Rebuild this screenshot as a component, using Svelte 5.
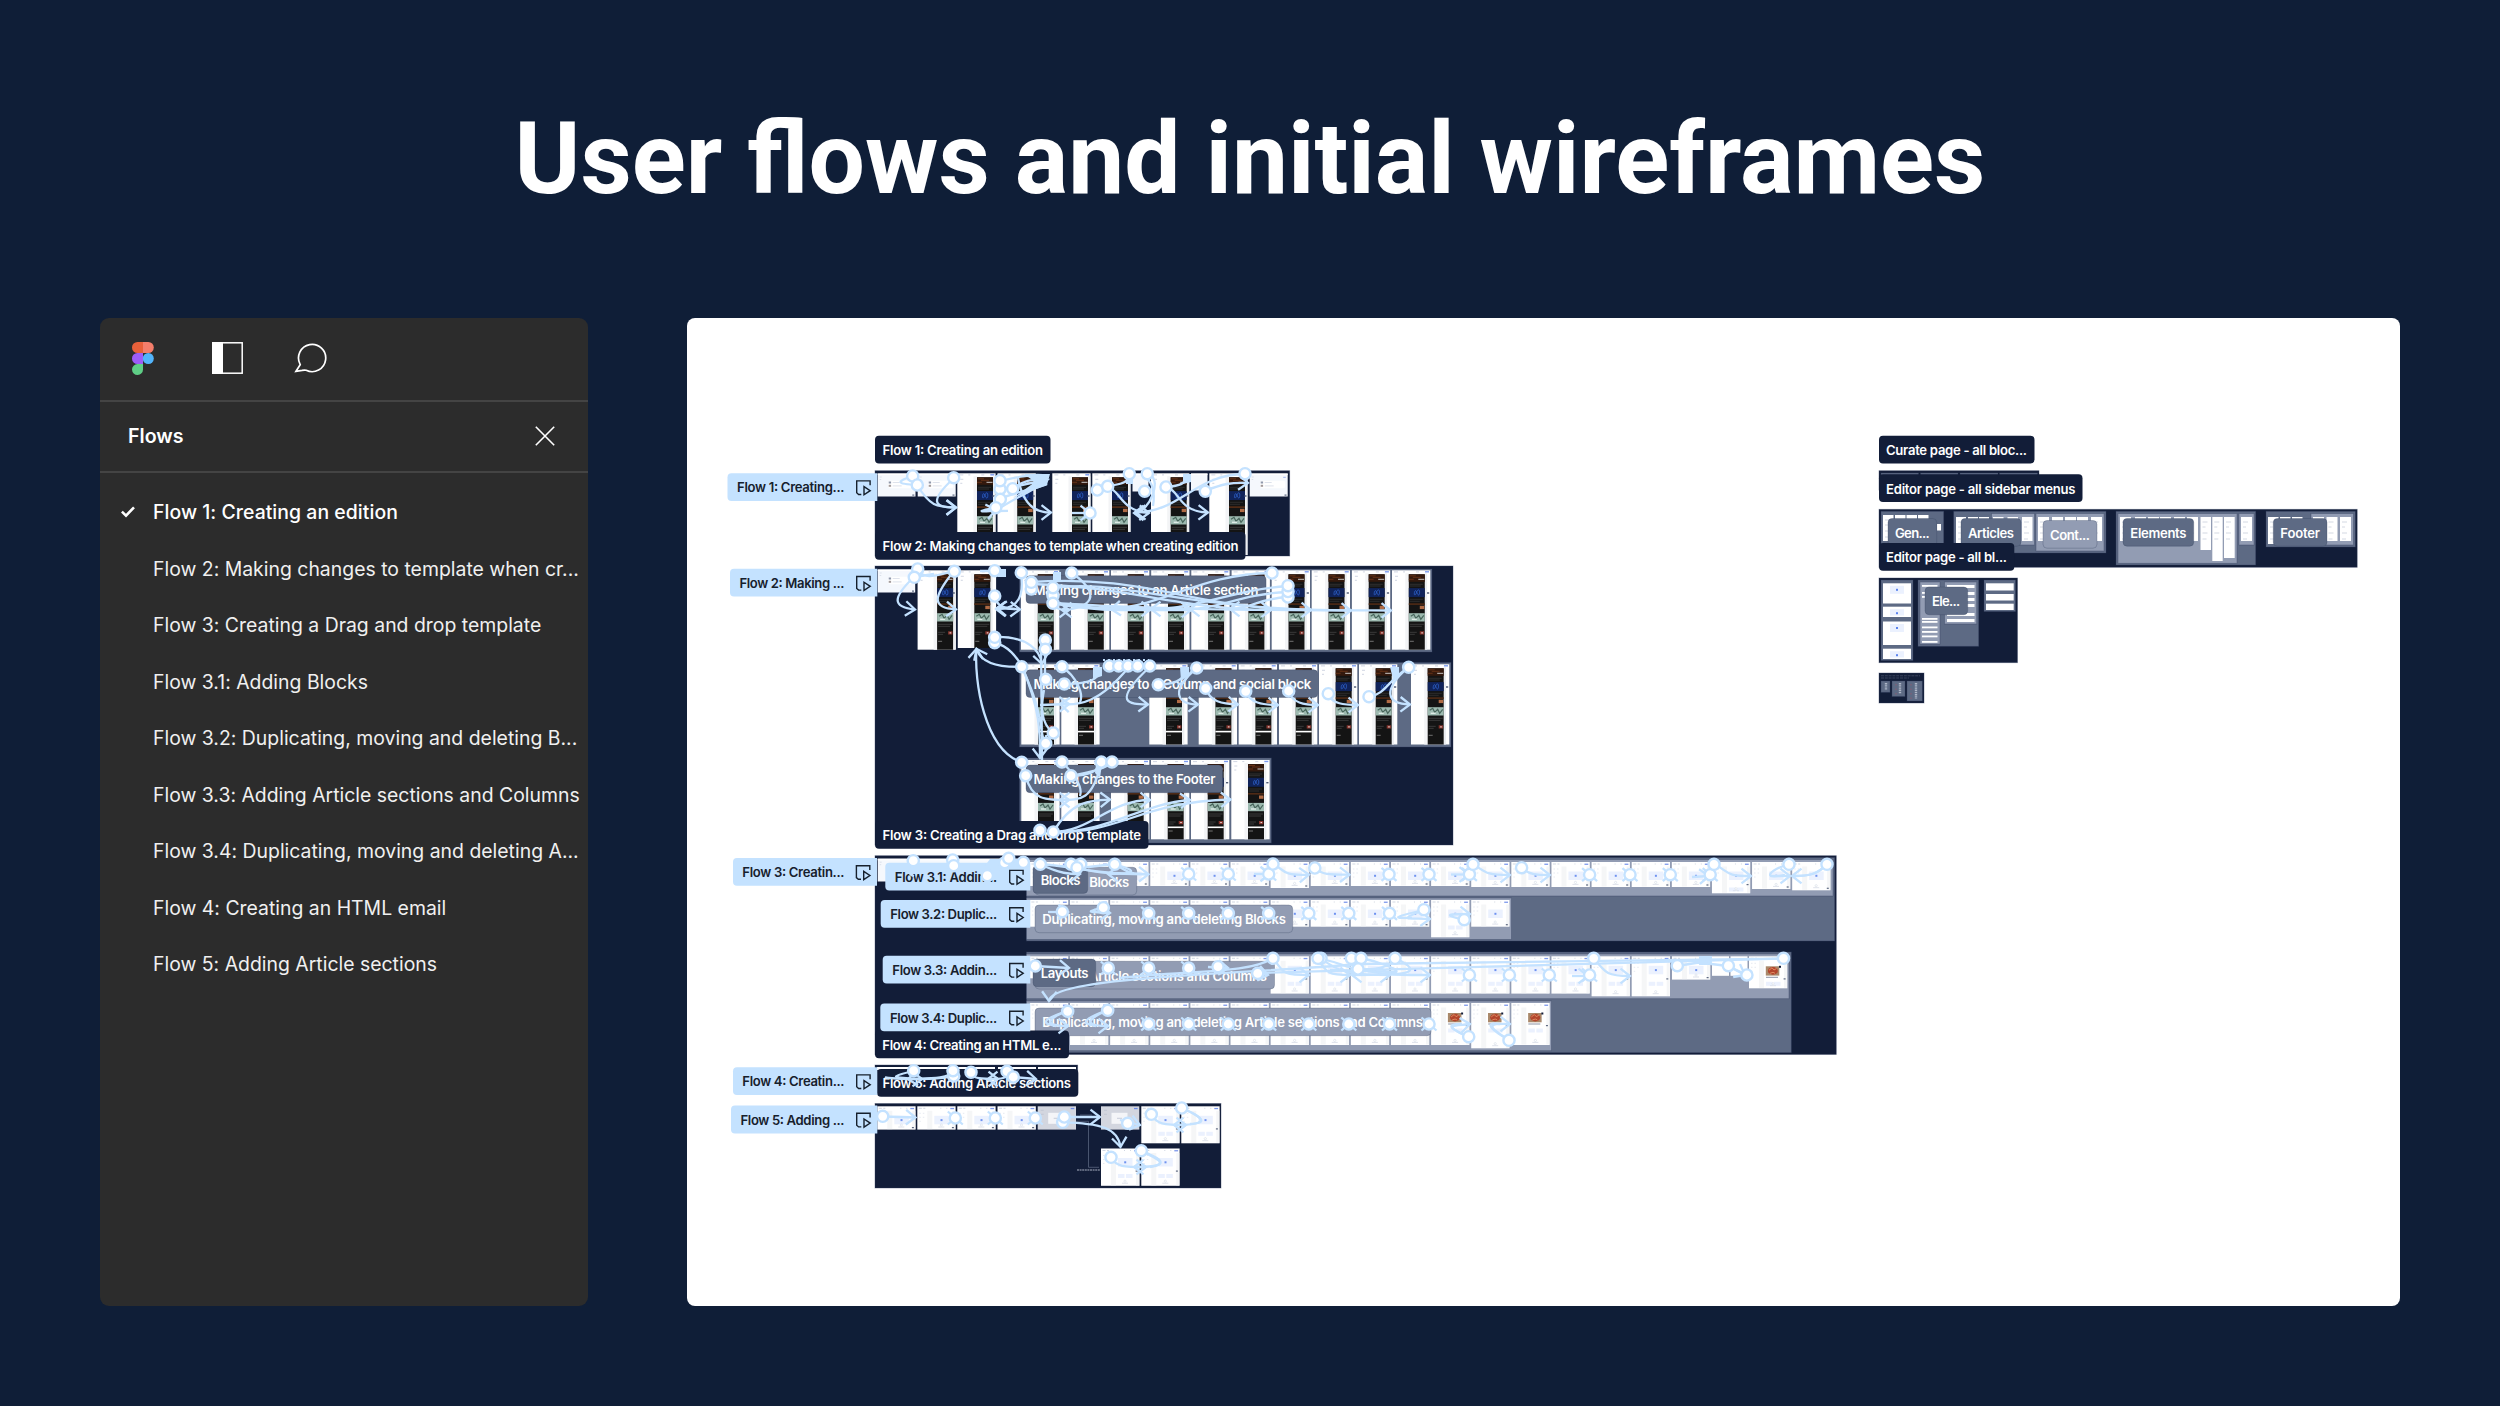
<script>
	const flows = [
		'Flow 1: Creating an edition',
		'Flow 2: Making changes to template when cr...',
		'Flow 3: Creating a Drag and drop template',
		'Flow 3.1: Adding Blocks',
		'Flow 3.2: Duplicating, moving and deleting B...',
		'Flow 3.3: Adding Article sections and Columns',
		'Flow 3.4: Duplicating, moving and deleting A...',
		'Flow 4: Creating an HTML email',
		'Flow 5: Adding Article sections'
	];
	let selected = 0;

	const NAVY = '#121d38';
	const SLATE = '#5d6a84';
	const MIST = '#929cb3';
	const SKY = '#c4e2ff';

	// sections: x1, y1, x2, y2, fill
	const sections = [
		[875, 470.7, 1289.7, 556, NAVY],
		[875, 566, 1453, 845, NAVY],
		[1019.5, 569, 1432, 652, SLATE],
		[1019.5, 662.5, 1451, 747, SLATE],
		[1019.5, 758, 1271.3, 843, SLATE],
		[875, 855.7, 1836.3, 1054.5, NAVY],
		[1026.5, 857.5, 1834.7, 941, SLATE],
		[1026.5, 859.5, 1833, 896, MIST],
		[1026.5, 898, 1511.5, 939.5, MIST],
		[1026.5, 952, 1791.3, 1052.7, SLATE],
		[1026.5, 954, 1789, 998.7, MIST],
		[1026.5, 1001, 1551.5, 1050.7, MIST],
		[875, 1065, 1077.7, 1090, NAVY],
		[875, 1103.5, 1221, 1188, NAVY],
		[1879, 470.7, 2039, 490, NAVY],
		[1881, 473, 1918.5, 480, SLATE],
		[1920.5, 473, 1958, 480, SLATE],
		[1960, 473, 1998, 480, SLATE],
		[1999.5, 473, 2037.5, 480, SLATE],
		[1879, 509.3, 2357.2, 567.3, NAVY],
		[1881, 511.3, 1943.7, 545, SLATE],
		[1953.7, 511.3, 2106, 553, SLATE],
		[1991.5, 513.5, 2034.5, 545, MIST],
		[2036, 513.5, 2104, 551, MIST],
		[2116, 511.3, 2255.7, 565, SLATE],
		[2118, 513.5, 2237, 563.3, MIST],
		[2239, 513.5, 2254, 545, MIST],
		[2266, 511.3, 2355.3, 547, SLATE],
		[2311, 513.5, 2353.5, 545, MIST],
		[1879, 578, 2017.5, 662.7, NAVY],
		[1881, 580, 1913, 660.5, SLATE],
		[1918, 580, 1978.7, 646.3, SLATE],
		[1920, 582, 1940, 644, MIST],
		[1944.5, 582, 1976.7, 624, MIST],
		[1984, 580, 2015.5, 611.5, SLATE],
		[1879, 673, 1924, 703, NAVY],
		[1881, 681, 1890, 692.3, SLATE],
		[1892, 681, 1905, 696.5, SLATE],
		[1907, 681, 1922.3, 701, SLATE]
	];

	// light pages: x, y, width, height, kind
	const col = (i) => 1029.9 + 40.12 * i;
	const tops = { 6: 888, 11: 887, 12: 887, 13: 887, 14: 887, 15: 887, 16: 887, 17: 893.3, 18: 889, 19: 890.3 };
	const pages = [
		[877.7, 473.5, 37.8, 23, 'list'],
		[917.7, 473.5, 38, 23, 'list'],
		[1132.5, 473.5, 16, 18, 'list'],
		[1191, 473.5, 16.5, 17, 'list'],
		[1249.7, 473.5, 38, 23, 'list'],
		[877.7, 569.5, 37.5, 23, 'list'],
		[877.7, 858.7, 150, 22.8, 'list'],
		...Array.from({ length: 20 }, (_, i) => [col(i), 862, 38.3, (tops[i] ?? 886) - 862, 'block']),
		...Array.from({ length: 12 }, (_, i) => [col(i), 900, 38.3, i === 10 ? 37.3 : 26.7, 'block']),
		...Array.from({ length: 16 }, (_, i) => [col(i), 956.3, 38.3, i < 6 ? 22 : i > 13 ? 40 : 37.3, 'tall']),
		[1672, 956.3, 38.3, 23.3, 'block'],
		[1712, 956.3, 17, 19.5, 'plain'],
		[1730.5, 956.3, 17, 19.5, 'plain'],
		[1749, 956.3, 38.3, 32, 'food'],
		...Array.from({ length: 13 }, (_, i) => [col(i), 1003, 38.3, i === 11 ? 45.3 : 42, i > 9 ? 'food' : 'tall']),
		...[877, 917, 957, 998, 1038].map((x) => [x, 1067, 38, 3, 'plain']),
		[877.3, 1106.3, 38.3, 23.3, 'block'],
		[917.3, 1106.3, 38.3, 23.3, 'block'],
		[957.3, 1106.3, 38.3, 23.3, 'block'],
		[997.5, 1106.3, 38.3, 23.3, 'block'],
		[1037.7, 1106.3, 38.3, 23.3, 'grey'],
		[1101, 1106.3, 38.3, 23.3, 'grey'],
		[1141.3, 1106.3, 38.3, 37, 'tall'],
		[1181.3, 1106.3, 38.3, 37, 'tall'],
		[1101, 1148.5, 38.6, 37.3, 'tall'],
		[1141.3, 1148.5, 38.3, 37.3, 'tall']
	];

	// email previews: x, top, bottom, offset of the dark column
	const at = (xs, y1, y2, dx) => xs.map((x) => [x, y1, y2, dx]);
	const mails = [
		...at([957.3, 997.5, 1052.3, 1092.3, 1151, 1209.3], 473.3, 555, 19.7),
		[917.6, 570.3, 649.7, 19.5],
		[957.8, 570.3, 648, 16.5],
		...at([1021, 1071, 1111, 1151.2, 1191.3, 1231.6, 1271.7, 1311.7, 1351.9, 1392], 570.3, 649.7, 16.8),
		...at([1021.3, 1061.3, 1149.3, 1198.7, 1238.7, 1279, 1319, 1359, 1411], 664.3, 744.5, 16.7),
		...at([1021.3, 1061.3, 1111, 1151, 1191, 1231.3], 760, 839.3, 16.7)
	];

	// plain boxes of the component sheets: x1, y1, x2, y2
	const boxes = [
		...[1883, 1895, 1906.5, 1918].map((x) => [x, 515, x + 10.5, 541]),
		[1937, 524, 1941, 530.5],
		...[1956, 1968, 1979].map((x) => [x, 517, x + 10, 543]),
		...[1993, 2007.5, 2022].map((x) => [x, 517, x + 10.5, 541]),
		...[2038, 2052, 2065, 2077, 2091].map((x) => [x, 517, x + 11, 541]),
		...[2120, 2135, 2148, 2160, 2174, 2187].map((x) => [x, 517, x + 11, 541]),
		[2200.5, 517, 2211, 550],
		[2212.3, 517, 2222.7, 561],
		[2224, 517, 2234.7, 558],
		[2241, 517, 2252, 541],
		...[2268, 2280, 2292].map((x) => [x, 517, x + 10.5, 544]),
		...[2313, 2326.5, 2340].map((x) => [x, 517, x + 11, 541]),
		[1883, 583.3, 1911, 603.5],
		[1883, 606.7, 1911, 617],
		[1883, 621.5, 1911, 645],
		[1883, 648.7, 1911, 659],
		[1986, 583.3, 2013.7, 590.5],
		[1986, 594, 2013.7, 600.5],
		[1986, 603.7, 2013.7, 610],
		...[585, 592, 596, 618, 621, 626.5, 631, 635.5, 641].map((y) => [1922, y, 1937.5, y + 1.8]),
		...[585, 592, 598, 604, 613, 619].map((y) => [1947, y, 1974.5, y + 3])
	];

	// section captions: x1, y1, x2, fill, text, text start, text end
	const labels = [
		[875, 435.7, 1050.5, NAVY, 'Flow 1: Creating an edition', 882.5, 1043],
		[875, 532, 1245.5, NAVY, 'Flow 2: Making changes to template when creating edition', 882.5, 1238.5],
		[1026, 575.7, 1266, SLATE, 'Making changes to an Article section', 1033.5, 1258.5],
		[1026, 669.8, 1317.7, SLATE, 'Making changes to a Column and social block', 1033.5, 1311.3],
		[1026, 765, 1222.7, SLATE, 'Making changes to the Footer', 1033.5, 1215.5],
		[875, 821, 1148.5, NAVY, 'Flow 3: Creating a Drag and drop template', 882.5, 1141],
		[1035, 867.3, 1136.7, MIST, 'Blocks', 1089.3, 1129.3],
		[1033, 865.7, 1087.7, SLATE, 'Blocks', 1040.7, 1080.5],
		[1035, 905, 1292.7, MIST, 'Duplicating, moving and deleting Blocks', 1042.3, 1286],
		[1035, 961.3, 1274.5, MIST, 'Article sections and Columns', 1089, 1267],
		[1033, 959, 1095.7, SLATE, 'Layouts', 1040.7, 1088.5],
		[1035, 1008, 1431, MIST, 'Duplicating, moving and deleting Article sections and Columns', 1042.3, 1423],
		[875, 1030.5, 1069, NAVY, 'Flow 4: Creating an HTML e...', 882.3, 1061.5],
		[877, 1069, 1078.3, NAVY, 'Flow 5: Adding Article sections', 882.5, 1071],
		[1879, 435.7, 2034.5, NAVY, 'Curate page - all bloc...', 1886, 2027],
		[1879, 474.3, 2082.5, NAVY, 'Editor page - all sidebar menus', 1886, 2075.5],
		[1888, 518.5, 1936.7, SLATE, 'Gen...', 1895, 1929.7],
		[1961, 518.5, 2021, SLATE, 'Articles', 1968, 2014],
		[2043, 520.5, 2097, MIST, 'Cont...', 2050, 2090],
		[2123, 518.5, 2193.7, SLATE, 'Elements', 2130.3, 2186.5],
		[2273.3, 518.5, 2327, SLATE, 'Footer', 2280.3, 2320],
		[1879, 543, 2014.3, NAVY, 'Editor page - all bl...', 1886, 2007],
		[1925, 587, 1967.7, SLATE, 'Ele...', 1932, 1960.3]
	];

	// flow starting points: x1, y1, x2, text, text start, text end
	const tags = [
		[727.5, 473.2, 877.3, 'Flow 1: Creating...', 737, 844.5],
		[730, 568.8, 877.3, 'Flow 2: Making ...', 739.5, 844.5],
		[733, 858, 877, 'Flow 3: Creatin...', 742.3, 844.5],
		[733, 1067.2, 877.3, 'Flow 4: Creatin...', 742.3, 844.5],
		[731, 1105.6, 877.3, 'Flow 5: Adding ...', 740.5, 844.5],
		[885.3, 862.7, 1030.3, 'Flow 3.1: Addin...', 894.7, 997.3],
		[880.7, 900, 1030.3, 'Flow 3.2: Duplic...', 890.3, 997.3],
		[882.7, 955.8, 1030.3, 'Flow 3.3: Addin...', 892.3, 997.3],
		[880.3, 1003.5, 1030.3, 'Flow 3.4: Duplic...', 890, 997.3]
	];

	// connectors without an arrow head
	const links = [
		'M912 476C896 482 896 484 917 485',
		'M1000 481C1030 474 1040 474 1047 476M1000 489C1020 486 1035 482 1047 480M1000 499C1020 490 1040 488 1047 484',
		'M1107.7 486C1120 484 1128 484 1129 474M1097 490L1108 486M1144 476C1156 484 1154 500 1153 506M1166 487C1180 486 1186 484 1188 474',
		'M914 577L934 574M954 571C934 576 926 580 917 570M994.7 571L980 571',
		'M1064 684C1080 684 1096 682 1098 674M1158 685C1170 684 1182 682 1184 674M1197 668C1184 674 1188 684 1178 684',
		'M1062 667C1076 676 1084 694 1080 702M1369 697C1386 694 1388 680 1408 668',
		'M1062 762C1080 780 1082 790 1080 796M1071 776C1094 775 1096 770 1100 765M1071 776C1086 772 1098 772 1112 763',
		'M1021 665C1032 690 1036 700 1040 720C1044 750 1047 744 1046 735M1045 650L1045 680M1041 640L1042 760M1053 733C1040 722 1041 706 1044 690',
		'M1040 864L1080 868L1114 864C1130 872 1126 874 1148 874M1040 864C1070 866 1090 874 1148 874',
		'M1008 858L1000 873M1004 863L1023 863M952 860L957 870M913 861C912 870 906 874 914 876',
		'M1273 958C1250 974 1190 970 1120 978M1257 973L1783.5 958.5M1318 958C1345 964 1350 969 1358 969C1380 970 1395 965 1395 958',
		'M1351 958L1361 958M1361 958C1380 962 1400 970 1396 972L1330 970M1677 966L1708 961M1728 966L1703 963M1728 966L1747 975',
		'M1789 864C1770 870 1760 880 1785 875M1827 864C1818 874 1810 876 1795 876M1423 910C1390 918 1394 918 1412 918',
		'M1067 1011C1040 1020 1042 1024 1056 1026M1107.7 1010C1080 1020 1082 1024 1096 1026',
		'M1469 1037C1448 1028 1446 1024 1462 1024M1509 1040C1484 1026 1488 1022 1500 1024',
		'M1181.7 1108C1204 1118 1208 1123 1190 1124M1141.3 1151C1160 1160 1168 1164 1150 1167',
		'M913 1071C885 1078 896 1077 915 1079M953 1076C940 1080 920 1079 905 1079'
	];
	const arrows = [
		'M917 485C930 506 936 507 956 507.5',
		'M954 478C930 500 932 508 956 507.5',
		'M996 508C970 512 985 512 996 510',
		'M1013 489C1026 478 1034 480 1047 480C1032 492 1010 500 996 511',
		'M1018 478C1024 510 1040 512.5 1051 512.5',
		'M1072 513L1090 513',
		'M1107 486C1120 490 1122 512 1149 513',
		'M1166 487C1180 490 1178 512 1208 512.5',
		'M1147 474C1164 476 1150 513 1134 513',
		'M1245 474C1196 474 1180 512 1136 512.5',
		'M1205 491C1222 484 1232 482 1248 483',
		'M914 577C892 598 892 607 915 609.5',
		'M954 571C932 598 932 608 956 609.5',
		'M994.7 596C996 606 1004 609 1020 609.5',
		'M1021 573C1026 605 1010 609 996 609',
		'M1015 609L997 608',
		'M1031 582C1150 574 1190 609 1311 610',
		'M1031 584C1140 588 1170 608 1271 610',
		'M1053 588C1120 578 1180 610 1351 610.5',
		'M1053 603C1160 610 1260 610 1391 610.5',
		'M1053 603C1090 612 1130 610 1191 610',
		'M1053 603C1080 608 1110 609 1151 609',
		'M1272 573C1200 574 1170 604 1111 609',
		'M1288 586C1230 590 1200 609 1151 609',
		'M1288 592C1240 594 1220 609 1190 609',
		'M1288 597C1260 598 1250 609 1230 609',
		'M1053 603C1056 609 1060 610 1069 610',
		'M1072 573C1110 600 1080 610 1062 610',
		'M994.7 637C1030 636 1040 652 1042 664',
		'M994.7 643C1010 646 1018 660 1022 666C1040 710 1040 730 1040 758',
		'M1021.7 666.7C980 668 978 652 976.5 649',
		'M1021.7 762.3C984 750 974 680 976.5 649',
		'M1040 705L1069 704',
		'M1128 668C1100 702 1080 706 1060 704',
		'M1149.7 667C1110 704 1130 704 1148 704.5',
		'M1197 668C1170 690 1176 704 1198 704.5',
		'M1205.7 688C1210 702 1222 704 1238 704.5',
		'M1245.7 691C1250 703 1262 705 1278 705',
		'M1288.7 691C1292 703 1304 705 1318 705',
		'M1328.3 694C1332 704 1344 705 1358 705',
		'M1408.7 667C1382 690 1386 704 1410 704.5',
		'M1025.7 776C1032 800 1044 800 1069 800',
		'M1101 764C1092 800 1082 800 1060 800',
		'M1053.3 832C1072 800 1092 800 1110 799.5',
		'M1053.3 832C1090 832 1110 800 1150 800',
		'M1053.3 832C1110 832 1140 804 1190 800',
		'M1053.3 832C1120 834 1140 802 1230.5 799.5',
		'M1040 864C1060 874 1070 874 1080 874',
		'M1114 864C1150 874 1120 874 1108 874',
		'M1077 868C1100 874 1120 874 1148.5 874.3',
		'M1254 874L1270 874',
		'M1273 864C1286 870 1280 876 1309 874.7',
		'M1314.8 868C1322 875 1330 874.7 1349.5 874.7',
		'M1451 874.5L1469 874.5',
		'M1473 864C1486 872 1484 875 1510 875',
		'M1521.6 868C1530 875 1536 875 1550 875',
		'M1692 877L1709 876',
		'M1714 864C1730 872 1724 876 1751 876',
		'M1827 864C1818 874 1810 876 1792 876',
		'M1770 876L1790 876',
		'M1048 912L1068 912',
		'M1103 908C1084 912 1088 912 1110 913',
		'M1423.9 910C1400 920 1402 918 1430 919',
		'M1464 920C1440 914 1450 914 1470 914',
		'M1035 966L1069 968',
		'M1783.5 958.5L1360 964C1250 974 1050 976 1049 1001',
		'M1208 967L1228 968',
		'M1257.7 973L1268 975',
		'M1273 958C1284 972 1280 975 1309 975',
		'M1318 958C1326 974 1330 975 1350 975',
		'M1321 958C1340 975 1360 975 1390 975',
		'M1358 969C1380 975 1400 975 1430 975',
		'M1395 958C1430 975 1400 975 1352 975',
		'M1572 976L1588 976',
		'M1593.7 958C1606 974 1608 976 1630 976',
		'M1728 966L1745 975',
		'M1067 1011C1040 1022 1050 1026 1068 1026',
		'M1108 1010C1080 1022 1090 1026 1108 1026',
		'M1469 1037C1440 1024 1455 1026 1470 1024',
		'M1509 1040C1480 1022 1495 1024 1510 1024',
		'M882.7 1116.5L915.5 1117.5',
		'M1064 1117L1100 1117',
		'M1062.7 1122.3C1100 1123 1118 1128 1120.5 1147',
		'M1120 1120L1140 1125',
		'M1151.3 1114.3C1156 1124 1164 1125 1186 1125',
		'M1181.7 1108C1210 1120 1206 1125 1174 1125',
		'M1111 1157.3C1116 1167 1124 1167 1146 1167',
		'M1141.3 1150.7C1170 1162 1166 1167 1134 1167',
		'M953 1071C950 1080 920 1078 908 1079',
		'M885 1077C888 1079 905 1079 922 1079',
		'M971 1072.3C972 1079 982 1079 998 1079',
		'M1007 1071C1010 1079 1000 1079 988 1079',
		'M1013 1077L1036 1079'
	];

	const row = (y, xs) => xs.map((x) => [x, y]);
	// hotspots that sit on an arrow tip and only show its corners
	const joints = [
		...row(874, [1188.7, 1228.3, 1268.7]),
		...row(874.3, [1389, 1429, 1469.4]),
		...row(874.7, [1589.6, 1630, 1670.3, 1710.2]),
		...row(913.3, [1148.7, 1188.7, 1228.3, 1268.7, 1308.8, 1348.8, 1389.5]),
		...row(968, [1108.3, 1148.7, 1188.7]),
		...row(975, [1469.4, 1509.4, 1549.3, 1589.6]),
		...row(1024, [1148.7, 1188.7, 1228.3, 1268.7, 1308.8, 1348.8, 1389.5, 1429]),
		...row(1118, [955.3, 995.3, 1035.3])
	];
	const spots = [
		[912.7, 476], [917.3, 485], [953.7, 477.7], [1000, 489], [1000, 480.7], [1012.7, 488.7],
		[1000.3, 499.3], [995.7, 507.7], [1097.3, 490], [1107.7, 486.3], [1090, 513],
		[1129.3, 473.7], [1147.3, 473.7], [1144.7, 491.3], [1166, 487], [1205.3, 491.3], [1245, 473.7],
		[917.7, 569], [914.3, 577.3], [954.3, 571.3], [994.7, 570.7], [994.7, 596],
		[994.7, 642.7], [994.7, 637.3], [1021.3, 572.7], [1031.3, 589], [1031.3, 582.3],
		[1053, 595.5], [1053, 587.7], [1053, 603.3], [1071.7, 573], [1045.3, 640], [1045.3, 649.3],
		[1272, 573], [1288, 597], [1288, 591.5], [1288, 585.7],
		[1021.7, 666.7], [1062, 666.7], [1045.7, 679.3], [1064.3, 684],
		...row(666, [1109.3, 1118.7, 1128, 1137.7, 1149.7]),
		[1158.3, 684.7], [1053.3, 733], [1045.7, 743.3], [1196.7, 668], [1205.7, 688.3],
		[1245.7, 691.3], [1288.7, 691], [1328.3, 693.7], [1369, 696.7], [1408.7, 667.3],
		[1021.7, 762.3], [1025.7, 775.7], [1062, 762], [1071, 775.7], [1101.3, 762], [1112, 762],
		[1040, 830.3], [1053.3, 832],
		[913.3, 860.7], [952.7, 860], [953.7, 865.7], [1004.7, 862.7], [1008.7, 858.3], [1023.3, 862.3],
		[987.3, 875.7], [1040.3, 864.3], [1071, 864.3], [1080.7, 864.3], [1077, 867.7], [1114.7, 864.3],
		[1273, 864], [1314.8, 868], [1473, 864.3], [1521.6, 867.7], [1714, 864.3], [1789, 864.3], [1827, 864.3],
		[1062.3, 911.7], [1103.3, 907.7], [1423.9, 909.7], [1464.2, 919.7],
		[1035.3, 966], [1218, 966.7], [1257.7, 973.3],
		...row(958.3, [1273, 1321, 1318, 1351.4, 1361, 1395, 1593.7, 1783.5]),
		[1358, 969], [1677.3, 965.7], [1728.4, 965.7], [1746.9, 975],
		[1067.7, 1011.3], [1107.7, 1010.3], [1468.7, 1036.7], [1509, 1040.3],
		[913.7, 1070.7], [953.7, 1076], [953, 1070.7], [971, 1072.3], [1007, 1071.3], [1013.3, 1077],
		[882.7, 1116.3], [1062.7, 1122.3], [1064.3, 1117], [1127.7, 1123.3], [1151.3, 1114.3],
		[1181.7, 1108], [1111, 1157.3], [1141.3, 1150.7]
	];
</script>

{#snippet page([x, y, w, h, kind])}
	<g transform="translate({x} {y})">
		<rect width={w} height={h} fill={kind === 'grey' ? '#d3d6df' : kind === 'list' ? '#f5f8fd' : '#fff'} />
		{#if kind === 'list'}
			<rect width={w} height="1.6" fill="#fff" />
			{#if w > 30}
				<rect x="10.5" y="7.3" width={Math.min(w, 38) - 13} height="7.4" rx="2" fill="#fff" />
				<rect x="11" y="8" width="2.4" height="2" fill="#8f98ab" />
				<rect x="11" y="11.3" width="2.4" height="2" fill="#a39b9b" />
				<path d="M15 9h7M15 12.4h9M2 3.5h2M2 6h1.5" stroke="#d5dbe6" stroke-width=".8" />
				<rect x="33.5" y="3.3" width="2.6" height="1" fill="#9db3f0" />
				<rect x={w - 3.2} y="21" width="2" height="1.2" fill="#5f6a82" />
			{/if}
		{:else if kind === 'grey'}
			<rect x="10.5" y="6.5" width="16" height="11" fill="#f4f5f8" />
			<rect x="33" y="1.6" width="3.6" height="1.3" fill="#6f8de8" />
			<path d="M16 12h5M3 4h3M3 8h3" stroke="#bcc3d2" stroke-width=".8" />
		{:else if kind !== 'plain'}
			<rect x="10" y="4.5" width="5" height={h - 5} fill="#f5f6f7" />
			<rect x="35" y="4.5" width="3" height={h - 5} fill="#f5f6f7" />
			<path d="M1.5 2h3M6 2h2M23 2h1M29 2h1" stroke="#c5cddb" stroke-width=".8" />
			<rect x="33" y="1.6" width="3.8" height="1.3" fill="#7f9aec" />
			<path d="M2 7h1.5M5.5 7h1.5M2 11h1.5M5.5 11h1.5M2 15h1.5" stroke="#e4e8f0" stroke-width=".9" />
			{#if kind === 'food'}
				<rect x="16.8" y="10" width="13.5" height="9.3" fill="#a9886a" />
				<ellipse cx="23.9" cy="14.6" rx="5" ry="3.8" fill="#b2452c" />
				<path d="M20 14l3-2.5 2 2.2 2.5-1.5M21 17l3-1 2 1" stroke="#e08a60" stroke-width="1" fill="none" />
				<path d="M17 21h12" stroke="#8b93a4" stroke-width="1" />
				<rect x="30" y="9.5" width="2" height="2" fill="#121d38" />
			{:else}
				<rect x="17" y="9.5" width="14.5" height="8.5" fill="#ebf1fe" />
				<rect x="23.2" y="12.8" width="2" height="2" fill="#6f92f0" />
			{/if}
			{#if h > 30}
				<rect x="17" y="25.5" width="6.5" height="4" fill="#ebf1fe" />
				<rect x="25" y="25.5" width="6.5" height="4" fill="#ebf1fe" />
			{/if}
			<circle cx="24" cy={h - 4.6} r="1.1" fill="none" stroke="#d5dbe6" stroke-width=".6" />
			<path d="M21 {h - 2.6}h6" stroke="#d5dbe6" stroke-width=".8" />
			<rect x="34.6" y={h > 30 ? 22 : h - 2.6} width="2" height="1.2" fill="#5f6a82" />
		{/if}
	</g>
{/snippet}

{#snippet mail([x, y1, y2, dx])}
	<g transform="translate({x} {y1})">
		<rect width="38.3" height={y2 - y1} fill="#fff" />
		<rect x={dx - 3.5} y="3" width="3.5" height={y2 - y1 - 3} fill="#f3f4f6" />
		<rect x={dx + 16.3} y="3" width="2" height={y2 - y1 - 3} fill="#eceef1" />
		<path d="M2 1.6h4M11 1.6h2M24 1.6h3M3 6h3M3 10h2" stroke="#c5ccda" stroke-width=".8" />
		<rect x="33" y=".8" width="4" height="1.4" fill="#7d9cf0" />
		<rect x={dx} y="4" width="16" height={y2 - y1 - 4} fill="#141414" />
		<g transform="translate({dx} 4)">
			<rect width="16" height="7.5" fill="#33190d" />
			<path d="M1 1.5h6M4 3h8M0 5h5" stroke="#6b3418" stroke-width=".9" />
			<path d="M9.5 5h6" stroke="#ddd" stroke-width=".9" />
			<path d="M1 10h13M1 11.7h11" stroke="#3c3c3c" stroke-width=".7" />
			<rect y="13.8" width="16" height="9" fill="#10235a" />
			<path d="M5.5 19.5c.2-4 1.7-4 2.7-1s2.6 3 2.6-.5-2-3-3 0-2.2 3.4-2.3 1.5z" fill="none" stroke="#2f62cc" stroke-width=".8" />
			<path d="M1 25h13M1 27h10" stroke="#383838" stroke-width=".7" />
			<path d="M0 29.8h16" stroke="#4f2a15" stroke-width="1.6" />
			<rect x="11" y="31.5" width="4.5" height="3.3" fill="#b06a44" />
			<rect y="38.9" width="16" height="8.3" fill="#9dbab0" />
			<path d="M2 42l3-2 2 4 3-3 2 4 3-4" fill="none" stroke="#48665c" stroke-width="1.2" />
			<path d="M3 45h5" stroke="#dfece7" stroke-width="1.4" />
			<path d="M1 50h14M1 52h12M1 58h7M1 60h5" stroke="#444" stroke-width=".8" />
			<rect x="11" y="57" width="4.3" height="3.2" fill="#86342c" />
			<path d="M12.5 58.6h1.6" stroke="#fff" stroke-width=".9" />
			{#if y1 > 660 && x < 1300}
				<rect y="62.5" width="16" height="1.6" fill="#fff" />
			{/if}
			<path d="M1 67h4" stroke="#999" stroke-width=".7" />
		</g>
		<rect x="35" y="22" width="2.2" height="1.4" fill="#4c5873" />
	</g>
{/snippet}

<div class="slide">
	<h1>User flows and initial wireframes</h1>

	<main>
		<aside>
			<div class="toolbar">
				<svg class="logo" width="22" height="33" viewBox="0 0 22 33">
					<path d="M5.5 0H11v11H5.5a5.5 5.5 0 0 1 0-11z" fill="#e8603a" />
					<path d="M11 0h5.3a5.5 5.5 0 0 1 0 11H11z" fill="#f47e6b" />
					<path d="M5.5 11H11v11H5.5a5.5 5.5 0 0 1 0-11z" fill="#9d5cf7" />
					<circle cx="16.3" cy="16.5" r="5.5" fill="#52b4fb" />
					<path d="M5.5 22H11v5.3a5.5 5.5 0 1 1-5.5-5.3z" fill="#5fce86" />
				</svg>
				<svg class="layout" width="32" height="32" viewBox="0 0 32 32">
					<rect x=".8" y=".8" width="29.4" height="30.4" fill="none" stroke="#fff" stroke-width="1.5" />
					<path d="M0 0h11v32H0z" fill="#fff" />
				</svg>
				<svg class="comment" width="34" height="32" viewBox="0 0 34 32" fill="none" stroke="#fff" stroke-width="1.7">
					<path d="M2 29.3 6.2 22.6A13.6 13.6 0 1 1 12.2 28.3Q10.5 27.8 8 28.4Z" />
				</svg>
			</div>
			<div class="head">
				<span>Flows</span>
				<svg width="20" height="20" viewBox="0 0 20 20" stroke="#fff" stroke-width="1.6">
					<path d="M.8.8l18.4 18.4M19.2.8.8 19.2" />
				</svg>
			</div>
			<ul>
				{#each flows as flow, i}
					<li class:selected={i === selected}>
						<span class="check">
							{#if i === selected}
								<svg width="14" height="12" viewBox="0 0 14 12" fill="none" stroke="#fff" stroke-width="2.6">
									<path d="M.9 5.6 5 9.6l8-8.3" />
								</svg>
							{/if}
						</span>
						{flow}
					</li>
				{/each}
			</ul>
		</aside>

		<svg class="board" viewBox="687 318 1713 988">
			<defs>
				<marker id="tip" viewBox="-11 -9 13 18" markerWidth="13" markerHeight="18" refX="0" refY="0" orient="auto" markerUnits="userSpaceOnUse">
					<path d="M-9.5-7.3 0 0-9.5 7.3" fill="none" stroke={SKY} stroke-width="2.3" />
				</marker>
			</defs>

			{#each sections as [x1, y1, x2, y2, fill]}
				<rect x={x1} y={y1} width={x2 - x1} height={y2 - y1} {fill} stroke="#33405f" stroke-opacity=".45" stroke-width=".8" />
			{/each}
			{#each pages as p}
				{@render page(p)}
			{/each}
			{#each mails as m}
				{@render mail(m)}
			{/each}
			{#each boxes as [x1, y1, x2, y2]}
				<rect x={x1} y={y1} width={x2 - x1} height={y2 - y1} fill="#fff" />
				{#if y2 - y1 > 22 && x2 - x1 < 15}
					<path d="M{x1 + 2} {y1 + 5}h5m-5 5h3m-3 6h5m-5 6h4" stroke="#c9cfdc" stroke-width=".8" />
				{:else if x2 - x1 > 25 && y2 - y1 > 9}
					<rect x={x1 + 7} y={y1 + 2.5} width="14" height={Math.min(y2 - y1 - 4, 8)} fill="#ebf1fe" />
					<rect x={x1 + 13} y={y1 + 5.5} width="2" height="2" fill="#5b83ee" />
				{/if}
			{/each}

			<!-- notes and tokens inside the small sheets -->
			<path d="M1076 1121.3h12.5v46H1099M1080 1115h12" fill="none" stroke="#58637d" stroke-width=".8" />
			<path d="M1077 1170h23" stroke="#aab1c1" stroke-width="1" stroke-dasharray="2 .6" />
			<path d="M1881 675.8h39M1881 678h28" stroke="#454f68" stroke-width=".8" stroke-dasharray="3 .8" />
			<path d="M1886 683v7M1900 683v11M1916 683v16" stroke="#aeb6c7" stroke-width="2.4" stroke-dasharray="1.4 .8" />
			<path d="M1896 684v11M1911 684v15" stroke="#8a5c72" stroke-width="1" stroke-dasharray="1.5 3" />

			{#each labels as [x1, y1, x2, fill, text, t1, t2]}
				<rect x={x1} y={y1} width={x2 - x1} height="27.7" rx="4" {fill} stroke="#33405f" stroke-opacity={fill === NAVY ? 0 : 0.4} stroke-width=".7" />
				<text x={t1} y={y1 + 19.2} textLength={t2 - t1} fill="#fff">{text}</text>
			{/each}

			{#each tags as [x1, y1, x2, text, t1, t2]}
				<path d="M{x2} {y1}H{x1 + 4}a4 4 0 0 0-4 4v19.8a4 4 0 0 0 4 4H{x2}z" fill={SKY} />
				<text x={t1} y={y1 + 19} textLength={t2 - t1} fill="#16202c">{text}</text>
				<g transform="translate({x2 - 21.3} {y1 + 7})" fill="none" stroke="#16202c" stroke-width="1.4">
					<path d="M5.3 14.3H2.6L.7 12.6V.7h13.4V5" />
					<path d="M8 6.4v8.2l6.2-4.1z" />
				</g>
			{/each}

			<path d="M1024 474h26l-3 11-34 13 22-16z" fill={SKY} />
			<path d="M1126 476h7v8h-7zM1183 474h8v8l-8 2zM1053 572h8v10h-8zM994 569h12v8h-8zM1093 667h9v9l-9 3zM1180 667h9v8l-8 6zM1390 667h9v9l-6 3zM1699 956h13v9h-13zM1096 764h6l-2 14-5-5z" fill={SKY} />
			<path d="M1103 660h46" stroke={SKY} stroke-width="2" stroke-dasharray="2 3" />
			<path d="M990 859h36v8h-42z" fill={SKY} />

			<g fill="none" stroke={SKY} stroke-width="2.3">
				{#each links as d}
					<path {d} />
				{/each}
				{#each arrows as d}
					<path {d} marker-end="url(#tip)" />
				{/each}
				{#each joints as [x, y]}
					<path d="M{x - 7.5} {y - 6.5}l15 13M{x - 7.5} {y + 6.5}l7.5-6.5" />
				{/each}
			</g>
			<g fill="#fff" stroke={SKY} stroke-width="2.4">
				{#each [...joints, ...spots] as [cx, cy]}
					<circle {cx} {cy} r="5.6" />
				{/each}
			</g>
		</svg>
	</main>
</div>

<style>
	:global(body) {
		background: #0f1e37;
	}

	.slide {
		box-sizing: border-box;
		width: 2500px;
		height: 1406px;
		padding: 99px 100px 0;
		overflow: hidden;
		background: #0f1e37;
		font-family: Inter, 'Liberation Sans', sans-serif;
	}

	h1 {
		height: 219px;
		margin: 0;
		color: #fff;
		font: 700 100px/120px Roboto, sans-serif;
		text-align: center;
	}

	main {
		display: flex;
		gap: 99px;
	}

	aside {
		width: 488px;
		height: 988px;
		border-radius: 9px;
		background: #2c2c2c;
		color: #fff;
	}

	.toolbar {
		box-sizing: border-box;
		display: flex;
		align-items: center;
		height: 84px;
		padding: 0 0 2px 32px;
		border-bottom: 2px solid #444;
	}

	.layout {
		margin-left: 58px;
	}

	.comment {
		margin-left: 50px;
	}

	.head {
		box-sizing: border-box;
		display: flex;
		align-items: center;
		justify-content: space-between;
		height: 71px;
		padding: 0 33px 2px 28px;
		border-bottom: 2px solid #444;
		font-size: 19.6px;
		font-weight: 600;
	}

	ul {
		margin: 0;
		padding: 11px 0 0;
		list-style: none;
	}

	li {
		display: flex;
		align-items: center;
		height: 56.5px;
		color: #f0f0f0;
		font-size: 19.4px;
		letter-spacing: 0.01px;
		white-space: nowrap;
	}

	.selected {
		color: #fff;
		font-weight: 500;
		letter-spacing: 0.06px;
	}

	.check {
		display: flex;
		width: 32px;
		padding-left: 21px;
	}

	.board {
		width: 1713px;
		height: 988px;
		border-radius: 8px;
		background: #fff;
	}

	text {
		font-size: 13.1px;
		font-weight: 600;
	}
</style>
